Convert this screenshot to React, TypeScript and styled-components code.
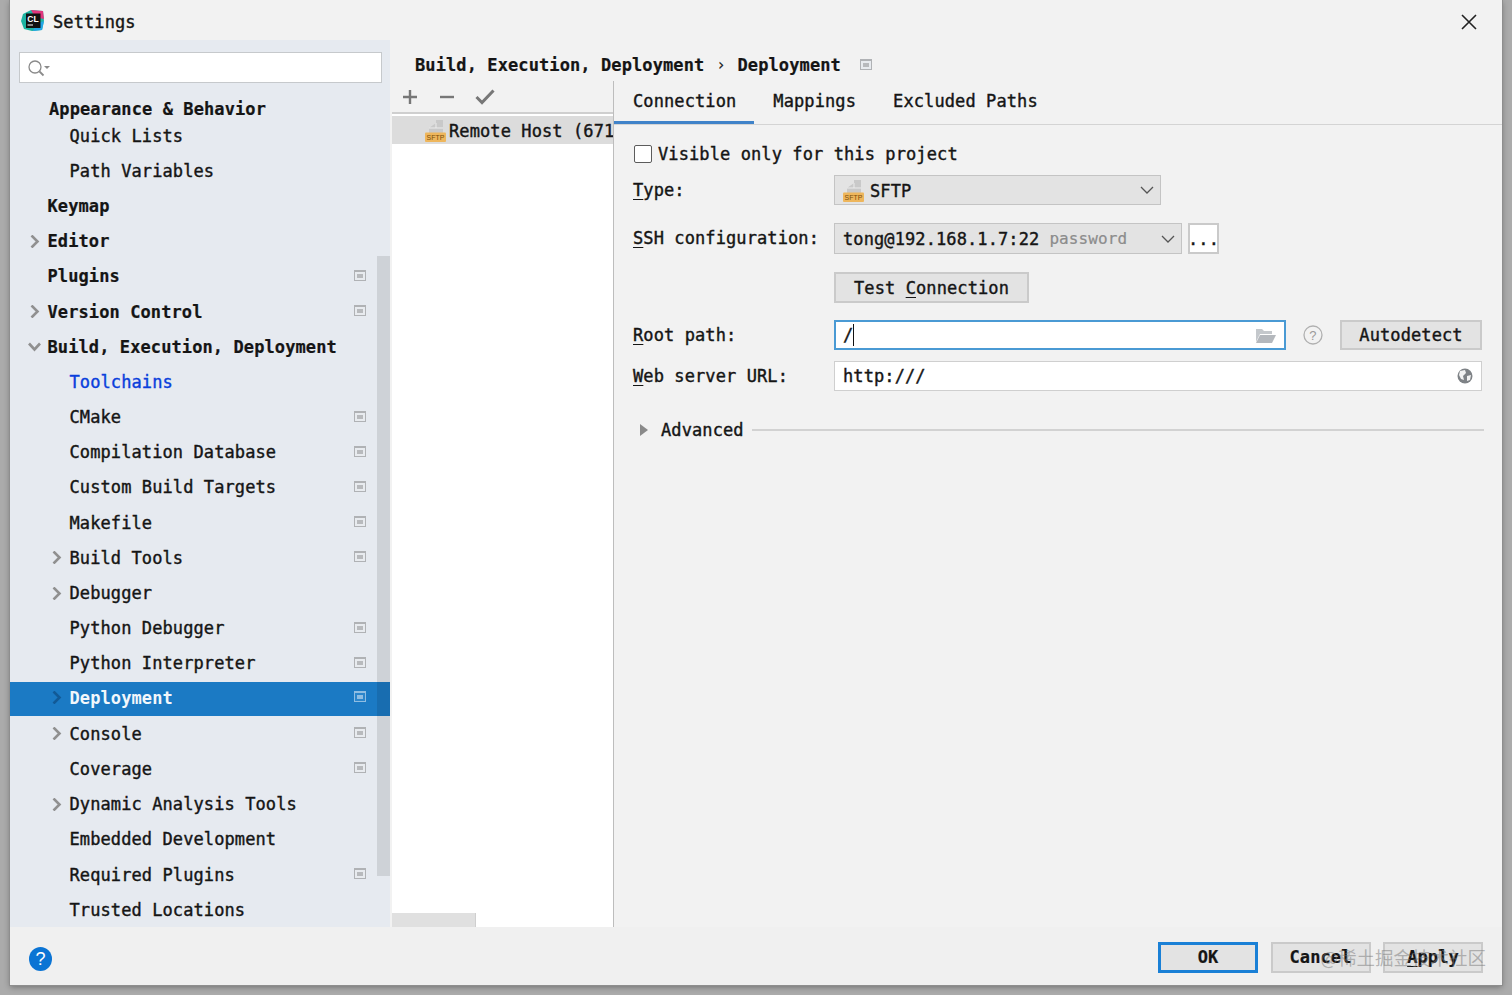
import React from "react";
import styled, { createGlobalStyle } from "styled-components";

const Global = createGlobalStyle`
  html, body { margin: 0; padding: 0; height: 100%; }
  body { background: #ababab; overflow: hidden; }
`;

const Page = styled.div`
  width: 1512px;
  height: 995px;
  padding: 0 10px 10px;
  box-sizing: border-box;
  font-family: "DejaVu Sans Mono", "Liberation Mono", monospace;
  font-size: 17px;
  letter-spacing: 0.1px;
  color: #151515;
  -webkit-text-stroke: 0.4px #151515;
  background: #ababab;
`;

const Window = styled.div`
  position: relative;
  height: 985px;
  display: grid;
  grid-template-rows: 40px 887px 58px;
  background: #f2f2f2;
  box-shadow: 0 0 0 1px #8e8e8e, 0 2px 6px rgba(0, 0, 0, 0.35);
`;

const TitleBar = styled.div`
  display: flex;
  align-items: center;
  padding: 0 25px 0 11px;
  letter-spacing: 0.1px;
`;

const TitleText = styled.span`
  margin-left: 8px;
  margin-top: 3px;
`;

const CloseButton = styled.div`
  margin-left: auto;
  display: flex;
  margin-top: 3px;
`;

const Body = styled.div`
  display: grid;
  grid-template-columns: 380px 1fr;
  min-height: 0;
`;

const Sidebar = styled.div`
  position: relative;
  background: #e6eaf0;
  overflow: hidden;
`;

const SearchBox = styled.div`
  margin: 12px 8px 0 9px;
  height: 31px;
  box-sizing: border-box;
  background: #fff;
  border: 1px solid #c6c9cc;
  display: flex;
  align-items: center;
  padding-left: 7px;
`;

const Tree = styled.div`
  padding-top: 16.2px;
`;

const Row = styled.div<{ $indent: number; $selected?: boolean; $first?: boolean }>`
  height: ${(p) => (p.$first ? "18.8px" : p.$selected ? "34.4px" : "35.2px")};
  margin-top: ${(p) => (p.$selected ? "0.8px" : "0")};
  padding-bottom: ${(p) => (p.$selected ? "2px" : "0")};
  box-sizing: border-box;
  display: flex;
  align-items: center;
  padding-left: ${(p) => p.$indent}px;
  padding-right: 24px;
  background: ${(p) => (p.$selected ? "#1b7ac4" : "transparent")};
  color: ${(p) => (p.$selected ? "#f2f7fb" : "inherit")};
`;

const ChevronSlot = styled.span`
  width: 22.5px;
  display: flex;
  justify-content: flex-start;
  padding-left: 3px;
  box-sizing: border-box;
`;

const RowLabel = styled.span<{ $bold?: boolean; $link?: boolean; $selected?: boolean }>`
  font-weight: ${(p) => (p.$bold || p.$selected ? 700 : 400)};
  color: ${(p) => (p.$link ? "#0a3fdc" : "inherit")};
  -webkit-text-stroke: ${(p) =>
    p.$selected ? "0" : p.$bold ? "0.2px #151515" : p.$link ? "0.4px #0a3fdc" : "0.4px #151515"};
  white-space: nowrap;
`;

const PinSlot = styled.span`
  margin-left: auto;
  margin-top: -2px;
  display: flex;
`;

const SideScrollThumb = styled.div`
  position: absolute;
  left: 367px;
  top: 216px;
  width: 13px;
  height: 620px;
  background: rgba(0, 0, 0, 0.1);
`;

const Main = styled.div`
  display: grid;
  grid-template-rows: 41px 1fr;
  min-height: 0;
  padding-left: 2px;
`;

const Breadcrumb = styled.div`
  display: flex;
  align-items: center;
  padding-left: 23px;
  padding-top: 8px;
  font-weight: 700;
  -webkit-text-stroke: 0.2px #151515;
  white-space: nowrap;
`;

const CrumbSep = styled.span`
  margin: 0 12px;
  font-weight: 400;
  font-size: 15px;
`;

const CrumbPin = styled.span`
  display: flex;
  margin-left: 19px;
`;

const Split = styled.div`
  display: grid;
  grid-template-columns: 222px 1fr;
  min-height: 0;
`;

const ListPane = styled.div`
  position: relative;
  display: flex;
  flex-direction: column;
  border-right: 1px solid #bdbdbd;
  overflow: hidden;
`;

const ListToolbar = styled.div`
  height: 33px;
  flex: none;
  display: flex;
  align-items: center;
  gap: 20.5px;
  padding-left: 10px;
  padding-top: 1px;
  box-sizing: border-box;
  border-bottom: 2px solid #cfcfcf;
`;

const ListBody = styled.div`
  flex: 1;
  background: #fff;
  padding-top: 2px;
`;

const ListRow = styled.div`
  height: 28px;
  display: flex;
  align-items: center;
  padding-left: 33px;
  background: #dcdcdc;
  white-space: nowrap;
`;

const RowText = styled.span`
  margin-left: 2px;
  margin-top: 2px;
`;

const ComboText = styled.span`
  margin-left: 5px;
  margin-top: 2px;
`;

const HScroll = styled.div`
  position: absolute;
  left: 0;
  bottom: 0;
  width: 83px;
  height: 14px;
  background: #e0e0e0;
  border-right: 1px solid #cfcfcf;
`;

const Panel = styled.div`
  display: flex;
  flex-direction: column;
  min-width: 0;
`;

const Tabs = styled.div`
  height: 44px;
  flex: none;
  display: flex;
  box-sizing: border-box;
  border-bottom: 1px solid #d4d4d4;
`;

const Tab = styled.div<{ $active?: boolean }>`
  height: 43px;
  box-sizing: border-box;
  padding: 0 18px ${(p) => (p.$active ? "1px" : "4px")} 19px;
  display: flex;
  align-items: center;
  border-bottom: ${(p) => (p.$active ? "3px solid #4083c9" : "none")};
`;

const Form = styled.div`
  padding: 0 20px 0 19px;
  margin-top: -1px;
  display: flex;
  flex-direction: column;
`;

const FormRow = styled.div<{ $top: number; $height: number }>`
  display: flex;
  align-items: center;
  margin-top: ${(p) => p.$top}px;
  height: ${(p) => p.$height}px;
  flex: none;
`;

const Label = styled.label`
  width: 201px;
  flex: none;
  white-space: nowrap;
  margin-top: -1px;
`;

const Mnemonic = styled.span`
  text-decoration: underline;
  text-underline-offset: 3px;
`;

const CheckBox = styled.span`
  width: 18px;
  height: 18px;
  margin-left: 1px;
  margin-right: 6px;
  box-sizing: border-box;
  background: #fff;
  border: 1px solid #5c5c5c;
  border-radius: 2px;
`;

const Combo = styled.div<{ $width: number }>`
  width: ${(p) => p.$width}px;
  height: 100%;
  box-sizing: border-box;
  background: #e3e3e3;
  border: 1px solid #c4c4c4;
  display: flex;
  align-items: center;
  padding: 0 6px 0 8px;
  white-space: nowrap;
`;

const Muted = styled.span`
  color: #8c8c8c;
  -webkit-text-stroke: 0.2px #8c8c8c;
  font-size: 16px;
  margin-left: 10px;
`;

const ComboArrow = styled.span`
  margin-left: auto;
  display: flex;
`;

const GhostButton = styled.div<{ $width: number; $white?: boolean; $primary?: boolean }>`
  width: ${(p) => p.$width}px;
  height: ${(p) => (p.$primary ? "31px" : "100%")};
  flex: none;
  box-sizing: border-box;
  background: ${(p) => (p.$white ? "#fff" : "#e3e3e3")};
  border: ${(p) => (p.$primary ? "3px solid #1a80d6" : "2px solid #cacaca")};
  display: flex;
  align-items: center;
  justify-content: center;
  white-space: nowrap;
`;

const DotsGap = styled.div`
  margin-left: 6px;
  height: 100%;
`;

const Indented = styled.div`
  margin-left: 201px;
  height: 100%;
`;

const Field = styled.div<{ $focused?: boolean }>`
  flex: 1;
  min-width: 0;
  height: 100%;
  box-sizing: border-box;
  background: #fff;
  border: ${(p) => (p.$focused ? "2px solid #4a9ad4" : "1px solid #cfcfcf")};
  padding: 0 ${(p) => (p.$focused ? "7px" : "8px")};
  display: flex;
  align-items: center;
`;

const Caret = styled.span`
  width: 1px;
  height: 22px;
  background: #111;
`;

const FieldIcon = styled.span`
  margin-left: auto;
  display: flex;
`;

const HelpWrap = styled.span`
  width: 54px;
  flex: none;
  display: flex;
  justify-content: center;
`;

const AdvancedArrow = styled.span`
  width: 28px;
  padding-left: 7px;
  box-sizing: border-box;
  flex: none;
  display: flex;
`;

const AdvancedLine = styled.div`
  flex: 1;
  height: 2px;
  background: #d2d2d2;
  margin-left: 8px;
  margin-right: -2px;
`;

const Footer = styled.div`
  position: relative;
  display: flex;
  align-items: center;
  padding: 6px 19px 0 19px;
  background: #f0f0f0;
  font-weight: 700;
  -webkit-text-stroke: 0.2px #151515;
`;

const HelpCircle = styled.div`
  width: 23px;
  height: 24px;
  border-radius: 50%;
  background: #0b74d4;
  color: #fff;
  font-family: "Liberation Sans", sans-serif;
  font-weight: 400;
  font-size: 18px;
  display: flex;
  align-items: center;
  justify-content: center;
  -webkit-text-stroke: 0;
`;

const FooterButtons = styled.div`
  margin-left: auto;
  margin-top: -4px;
  display: flex;
  gap: 12.5px;
  height: 31px;
`;

const Watermark = styled.div`
  position: absolute;
  right: 16px;
  top: 17px;
  font-family: "Noto Sans CJK SC", sans-serif;
  font-size: 18.5px;
  font-weight: 400;
  letter-spacing: 0;
  color: rgba(120, 120, 120, 0.5);
  -webkit-text-stroke: 0;
  white-space: nowrap;
  pointer-events: none;
`;

const Pin = ({ dark }: { dark?: boolean }) => (
  <svg width="12" height="11" viewBox="0 0 12 11">
    <rect x="0.5" y="0.5" width="11" height="10" fill={dark ? "#2b85cb" : "#e8ebef"} stroke={dark ? "#8fbde2" : "#b0b2b5"} />
    <rect x="0" y="0" width="12" height="2" fill={dark ? "#8fbde2" : "#b0b2b5"} />
    <rect x="3" y="4" width="6" height="4" fill={dark ? "#8fbde2" : "#b8babd"} />
  </svg>
);

const Chevron = ({ open, dark }: { open?: boolean; dark?: boolean }) => (
  <svg width="13" height="13" viewBox="0 0 13 13" fill="none">
    <path
      d={open ? "M1 3.5 L6.5 9.5 L12 3.5" : "M3.5 0.5 L9.5 6.5 L3.5 12.5"}
      stroke={dark ? "#125a96" : "#909090"}
      strokeWidth="2.6"
    />
  </svg>
);

const Logo = () => (
  <svg width="24" height="23" viewBox="0 0 24 23">
    <path d="M2 5 L10 1 L22 2 L23 12 L21 21 L11 22 L3 20 L0 12 Z" fill="#1db3a2" />
    <path d="M10 1 L22 2 L23 10 L14 8 Z" fill="#e0357d" />
    <path d="M12 22 L21 21 L23 12 L15 15 Z" fill="#22a6e8" />
    <rect x="5" y="4.5" width="14.5" height="14.5" fill="#111" />
    <text x="6.3" y="12.6" fontFamily="Liberation Sans" fontWeight="700" fontSize="8.5" fill="#fff" stroke="none">CL</text>
    <rect x="6.5" y="15.5" width="5.5" height="1" fill="#fff" />
  </svg>
);

const SftpIcon = () => (
  <svg width="22" height="24" viewBox="0 0 22 24" style={{ flex: "none" }}>
    <path d="M4 15 V10 L11 5 V2 H18 V15 Z" fill="#c9c9c9" />
    <path d="M4 10 H18 M11 5 V10" stroke="#ececec" strokeWidth="1" />
    <rect x="0" y="14.5" width="21" height="9.5" rx="1" fill="#eeb65c" />
    <text x="1.5" y="22" fontFamily="Liberation Sans" fontSize="8" textLength="18" lengthAdjust="spacingAndGlyphs" fill="#7a4d08" stroke="none">SFTP</text>
  </svg>
);

const Plus = () => (
  <svg width="16" height="16" viewBox="0 0 16 16">
    <path d="M8 1 V15 M1 8 H15" stroke="#777" strokeWidth="2.4" />
  </svg>
);
const Minus = () => (
  <svg width="16" height="16" viewBox="0 0 16 16">
    <path d="M1 8 H15" stroke="#777" strokeWidth="2.4" />
  </svg>
);
const Check = () => (
  <svg width="20" height="16" viewBox="0 0 20 16">
    <path d="M1.5 8 L7 13.5 L18.5 1.5" stroke="#777" strokeWidth="3" fill="none" />
  </svg>
);

const rows: Array<{ t: string; lvl: 0 | 1; bold?: boolean; chev?: "open" | "closed"; pin?: boolean; link?: boolean; sel?: boolean }> = [
  { t: "Quick Lists", lvl: 1 },
  { t: "Path Variables", lvl: 1 },
  { t: "Keymap", lvl: 0, bold: true },
  { t: "Editor", lvl: 0, bold: true, chev: "closed" },
  { t: "Plugins", lvl: 0, bold: true, pin: true },
  { t: "Version Control", lvl: 0, bold: true, chev: "closed", pin: true },
  { t: "Build, Execution, Deployment", lvl: 0, bold: true, chev: "open" },
  { t: "Toolchains", lvl: 1, link: true },
  { t: "CMake", lvl: 1, pin: true },
  { t: "Compilation Database", lvl: 1, pin: true },
  { t: "Custom Build Targets", lvl: 1, pin: true },
  { t: "Makefile", lvl: 1, pin: true },
  { t: "Build Tools", lvl: 1, chev: "closed", pin: true },
  { t: "Debugger", lvl: 1, chev: "closed" },
  { t: "Python Debugger", lvl: 1, pin: true },
  { t: "Python Interpreter", lvl: 1, pin: true },
  { t: "Deployment", lvl: 1, chev: "closed", pin: true, sel: true },
  { t: "Console", lvl: 1, chev: "closed", pin: true },
  { t: "Coverage", lvl: 1, pin: true },
  { t: "Dynamic Analysis Tools", lvl: 1, chev: "closed" },
  { t: "Embedded Development", lvl: 1 },
  { t: "Required Plugins", lvl: 1, pin: true },
  { t: "Trusted Locations", lvl: 1 },
];

export default function App() {
  return (
    <Page>
      <Global />
      <Window>
        <TitleBar>
          <Logo />
          <TitleText>Settings</TitleText>
          <CloseButton>
            <svg width="16" height="16" viewBox="0 0 16 16">
              <path d="M1 1 L15 15 M15 1 L1 15" stroke="#222" strokeWidth="1.6" />
            </svg>
          </CloseButton>
        </TitleBar>
        <Body>
          <Sidebar>
            <SearchBox>
              <svg width="24" height="18" viewBox="0 0 24 18" fill="none">
                <circle cx="8" cy="8" r="6" stroke="#8a8a8a" strokeWidth="1.3" />
                <path d="M12.5 12.5 L16.5 16.5" stroke="#8a8a8a" strokeWidth="1.8" />
                <path d="M17 7 L23 7 L20 10 Z" fill="#8a8a8a" />
              </svg>
            </SearchBox>
            <Tree>
              <Row $indent={39} $first>
                <RowLabel $bold>Appearance &amp; Behavior</RowLabel>
              </Row>
              {rows.map((r) => (
                <Row key={r.t} $indent={r.lvl === 0 ? 15 : 37} $selected={r.sel}>
                  <ChevronSlot>
                    {r.chev && <Chevron open={r.chev === "open"} dark={r.sel} />}
                  </ChevronSlot>
                  <RowLabel $bold={r.bold} $link={r.link} $selected={r.sel}>
                    {r.t}
                  </RowLabel>
                  {r.pin && (
                    <PinSlot>
                      <Pin dark={r.sel} />
                    </PinSlot>
                  )}
                </Row>
              ))}
            </Tree>
            <SideScrollThumb />
          </Sidebar>
          <Main>
            <Breadcrumb>
              Build, Execution, Deployment
              <CrumbSep>›</CrumbSep>
              Deployment
              <CrumbPin>
                <Pin />
              </CrumbPin>
            </Breadcrumb>
            <Split>
              <ListPane>
                <ListToolbar>
                  <Plus />
                  <Minus />
                  <Check />
                </ListToolbar>
                <ListBody>
                  <ListRow>
                    <SftpIcon />
                    <RowText>Remote Host (671</RowText>
                  </ListRow>
                </ListBody>
                <HScroll />
              </ListPane>
              <Panel>
                <Tabs>
                  <Tab $active>Connection</Tab>
                  <Tab>Mappings</Tab>
                  <Tab>Excluded Paths</Tab>
                </Tabs>
                <Form>
                  <FormRow $top={21} $height={18}>
                    <CheckBox />
                    Visible only for this project
                  </FormRow>
                  <FormRow $top={12} $height={30}>
                    <Label>
                      <Mnemonic>T</Mnemonic>ype:
                    </Label>
                    <Combo $width={327}>
                      <SftpIcon />
                      <ComboText>SFTP</ComboText>
                      <ComboArrow>
                        <svg width="14" height="8" viewBox="0 0 14 8" fill="none">
                          <path d="M1 1 L7 7 L13 1" stroke="#555" strokeWidth="1.3" />
                        </svg>
                      </ComboArrow>
                    </Combo>
                  </FormRow>
                  <FormRow $top={18} $height={31}>
                    <Label>
                      <Mnemonic>S</Mnemonic>SH configuration:
                    </Label>
                    <Combo $width={348}>
                      tong@192.168.1.7:22
                      <Muted>password</Muted>
                      <ComboArrow>
                        <svg width="14" height="8" viewBox="0 0 14 8" fill="none">
                          <path d="M1 1 L7 7 L13 1" stroke="#555" strokeWidth="1.3" />
                        </svg>
                      </ComboArrow>
                    </Combo>
                    <DotsGap>
                      <GhostButton $width={31} $white>...</GhostButton>
                    </DotsGap>
                  </FormRow>
                  <FormRow $top={18} $height={31}>
                    <Indented>
                      <GhostButton $width={195}>
                        <span>
                          Test <Mnemonic>C</Mnemonic>onnection
                        </span>
                      </GhostButton>
                    </Indented>
                  </FormRow>
                  <FormRow $top={17} $height={30}>
                    <Label>
                      <Mnemonic>R</Mnemonic>oot path:
                    </Label>
                    <Field $focused>
                      /<Caret />
                      <FieldIcon>
                        <svg width="22" height="18" viewBox="0 0 22 18">
                          <path d="M1 3 H7 L9 5 H17 V8 H5 L1 16 Z" fill="#c4c8cc" />
                          <path d="M5 9 H21 L17 17 H1 Z" fill="#b4b8bd" />
                        </svg>
                      </FieldIcon>
                    </Field>
                    <HelpWrap>
                      <svg width="20" height="20" viewBox="0 0 20 20">
                        <circle cx="10" cy="10" r="9" fill="none" stroke="#b0b0b0" strokeWidth="1.3" />
                        <text x="10" y="15" textAnchor="middle" fontFamily="Liberation Sans" fontSize="13" fill="#9a9a9a" stroke="none">?</text>
                      </svg>
                    </HelpWrap>
                    <GhostButton $width={142}>Autodetect</GhostButton>
                  </FormRow>
                  <FormRow $top={11} $height={30}>
                    <Label>
                      <Mnemonic>W</Mnemonic>eb server URL:
                    </Label>
                    <Field>
                      http:///
                      <FieldIcon>
                        <svg width="16" height="16" viewBox="0 0 16 16">
                          <circle cx="8" cy="8" r="7.5" fill="#7e8286" />
                          <path d="M3 3 L8 2 L9 5 L6 8 L7 12 L4 11 L2 7 Z M10 8 L14 7 L13 12 L10 13 Z" fill="#f2f2f2" />
                        </svg>
                      </FieldIcon>
                    </Field>
                  </FormRow>
                  <FormRow $top={30} $height={18}>
                    <AdvancedArrow>
                      <svg width="8" height="12" viewBox="0 0 8 12">
                        <path d="M0 0 L8 6 L0 12 Z" fill="#8a8a8a" />
                      </svg>
                    </AdvancedArrow>
                    Advanced
                    <AdvancedLine />
                  </FormRow>
                </Form>
              </Panel>
            </Split>
          </Main>
        </Body>
        <Footer>
          <HelpCircle>?</HelpCircle>
          <FooterButtons>
            <GhostButton $width={100} $primary>OK</GhostButton>
            <GhostButton $width={100}>Cancel</GhostButton>
            <GhostButton $width={100}>
              <span>
                <Mnemonic>A</Mnemonic>pply
              </span>
            </GhostButton>
          </FooterButtons>
          <Watermark>@稀土掘金技术社区</Watermark>
        </Footer>
      </Window>
    </Page>
  );
}
